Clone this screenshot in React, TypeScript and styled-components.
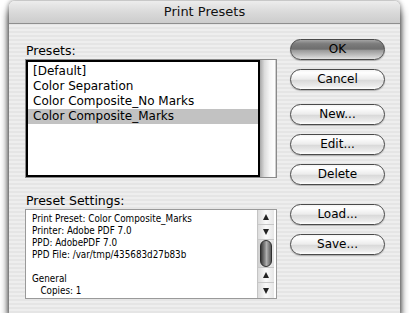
import React from 'react';
import styled, {createGlobalStyle} from "styled-components";

const GlobalStyle = createGlobalStyle`
  html, body {
    margin: 0;
    padding: 0;
    background: #ffffff;
    font-family: "DejaVu Sans", "Noto Sans", sans-serif;
    color: #000;
  }
`

const presets = ['[Default]', 'Color Separation', 'Color Composite_No Marks', 'Color Composite_Marks'];

const settings = [
    'Print Preset: Color Composite_Marks',
    'Printer: Adobe PDF 7.0',
    'PPD: AdobePDF 7.0',
    'PPD File: /var/tmp/435683d27b83b',
    '',
    'General',
    '   Copies: 1',
];

const buttons = [
    {label: 'OK', gap: 0, isDefault: true},
    {label: 'Cancel', gap: 9},
    {label: 'New...', gap: 14},
    {label: 'Edit...', gap: 9},
    {label: 'Delete', gap: 9},
    {label: 'Load...', gap: 19},
    {label: 'Save...', gap: 9},
];

export default function App() {
    return (
        <>
            <GlobalStyle/>
            <Window>
                <TitleBar>Print Presets</TitleBar>
                <Body>
                    <LeftPane>
                        <Label>Presets:</Label>
                        <ListFrame>
                            <ListBody>
                                {presets.map((p, i) => (
                                    <ListRow key={p} $selected={i === 3}>{p}</ListRow>
                                ))}
                            </ListBody>
                            <ScrollTrack/>
                        </ListFrame>
                        <Label $top={16}>Preset Settings:</Label>
                        <SettingsBox>
                            <SettingsText>
                                {settings.map((s, i) => (
                                    <SettingsLine key={i}>{s || '\u00a0'}</SettingsLine>
                                ))}
                            </SettingsText>
                            <ScrollBar>
                                <ArrowCell><Triangle $up/></ArrowCell>
                                <ArrowCell><Triangle/></ArrowCell>
                                <ThumbSlot><Thumb/></ThumbSlot>
                                <ArrowCell><Triangle $up/></ArrowCell>
                                <ArrowCell $last><Triangle/></ArrowCell>
                            </ScrollBar>
                        </SettingsBox>
                    </LeftPane>
                    <ButtonColumn>
                        {buttons.map(b => (
                            <AquaButton key={b.label} $gap={b.gap} $default={b.isDefault}>{b.label}</AquaButton>
                        ))}
                    </ButtonColumn>
                </Body>
            </Window>
        </>
    );
}

const Window = styled.div`
  margin: 1px 9px 0 9px;
  width: 391px;
  height: 312px;
  border-radius: 6px 6px 0 0;
  box-shadow: 0 8px 8px 0 rgba(0, 0, 0, 0.8), 0 0 4px 1px rgba(0, 0, 0, 0.35);
  background: repeating-linear-gradient(to bottom, #eeeeee 0px, #eeeeee 2px, #e5e5e5 2px, #e5e5e5 4px);
  overflow: hidden;
  display: flex;
  flex-direction: column;
`

const TitleBar = styled.div`
  height: 22px;
  flex: none;
  border-bottom: 1px solid #8e8e8e;
  background: linear-gradient(to bottom, #ededed, #dadada 50%, #cccccc);
  text-align: center;
  font-size: 13px;
  line-height: 22px;
  color: #111;
`

const Body = styled.div`
  flex: 1;
  display: flex;
  gap: 13px;
  padding: 15px 15px 15px 16px;
`

const LeftPane = styled.div`
  width: 252px;
  display: flex;
  flex-direction: column;
  padding-top: 5px;
`

const Label = styled.div<{ $top?: number }>`
  margin-top: ${p => p.$top || 0}px;
  height: 15px;
  font-size: 12.5px;
  line-height: 14px;
  padding-left: 1px;
`

const ListFrame = styled.div`
  height: 119px;
  border: 1px solid #8a8a8a;
  display: flex;
  background: #fff;
  box-sizing: border-box;
`

const ListBody = styled.div`
  flex: 1;
  border: 2px solid #000;
  padding-top: 2px;
`

const ListRow = styled.div<{ $selected?: boolean }>`
  height: 15px;
  line-height: 15px;
  font-size: 12px;
  padding-left: 5px;
  background: ${p => p.$selected ? '#c2c2c2' : 'transparent'};
`

const ScrollTrack = styled.div`
  width: 15px;
  background: linear-gradient(to right, #a8a8a8, #dcdcdc 30%, #f6f6f6 65%, #ffffff);
  border-right: 1px solid #cfcfcf;
`

const SettingsBox = styled.div`
  flex: 1;
  border: 1px solid #9a9a9a;
  background: #fff;
  display: flex;
`

const SettingsText = styled.div`
  flex: 1;
  padding: 3px 0 0 6px;
  font-family: "DejaVu Sans Condensed", "DejaVu Sans", sans-serif;
  font-size: 9.8px;
  white-space: pre;
`

const SettingsLine = styled.div`
  height: 12px;
  line-height: 12px;
`

const ScrollBar = styled.div`
  width: 16px;
  margin-right: 2px;
  border-left: 1px solid #c4c4c4;
  display: flex;
  flex-direction: column;
`

const ArrowCell = styled.div<{ $last?: boolean }>`
  height: 15px;
  display: flex;
  align-items: center;
  justify-content: center;
  background: linear-gradient(to right, #dcdcdc, #fafafa 50%, #e6e6e6);
  border-bottom: ${p => p.$last ? 'none' : '1px solid #c8c8c8'};
  box-sizing: border-box;
`

const Triangle = styled.div<{ $up?: boolean }>`
  width: 0;
  height: 0;
  border-left: 3.5px solid transparent;
  border-right: 3.5px solid transparent;
  ${p => p.$up ? 'border-bottom: 6px solid #222;' : 'border-top: 6px solid #222;'}
`

const ThumbSlot = styled.div`
  flex: 1;
  display: flex;
  align-items: center;
  justify-content: center;
  background: linear-gradient(to right, #cfcfcf, #f2f2f2 60%, #e0e0e0);
  border-bottom: 1px solid #c8c8c8;
`

const Thumb = styled.div`
  width: 12px;
  height: 27px;
  border-radius: 6px;
  border: 1px solid #2e2e2e;
  box-sizing: border-box;
  background: linear-gradient(to right, #3a3a3a, #8a8a8a 40%, #b0b0b0 55%, #5a5a5a);
`

const ButtonColumn = styled.div`
  width: 95px;
  display: flex;
  flex-direction: column;
`

const AquaButton = styled.div<{ $gap: number; $default?: boolean }>`
  margin-top: ${p => p.$gap}px;
  height: 21px;
  box-sizing: border-box;
  border-radius: 11px;
  border: 1px solid #4a4a4a;
  text-align: center;
  font-size: 12px;
  line-height: 19px;
  color: #000;
  background: ${p => p.$default
    ? 'linear-gradient(to bottom, #a4a4a4 0%, #7c7c7c 20%, #6e6e6e 48%, #9a9a9a 55%, #c8c8c8 85%, #e2e2e2 100%)'
    : 'linear-gradient(to bottom, #f4f4f4 0%, #ffffff 15%, #ececec 48%, #dadada 55%, #ececec 85%, #ffffff 100%)'};
  box-shadow: 0 1px 1px rgba(0, 0, 0, 0.25);
`
